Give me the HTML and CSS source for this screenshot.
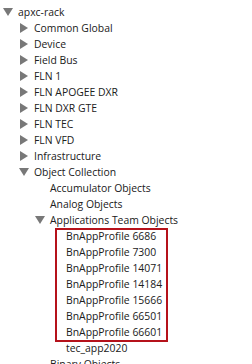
FILE: index.html
```html
<!DOCTYPE html>
<html lang="en">
<head>
<meta charset="utf-8"/>
<title>apxc-rack</title>
<link rel="stylesheet" href="styles.css">
</head>
<body>
<ul class="tree">
  <li><div class="row"><span class="tw open"></span>apxc-rack</div>
    <ul>
      <li><div class="row"><span class="tw"></span>Common Global</div></li>
      <li><div class="row"><span class="tw"></span>Device</div></li>
      <li><div class="row"><span class="tw"></span>Field Bus</div></li>
      <li><div class="row"><span class="tw"></span>FLN 1</div></li>
      <li><div class="row"><span class="tw"></span>FLN APOGEE DXR</div></li>
      <li><div class="row"><span class="tw"></span>FLN DXR GTE</div></li>
      <li><div class="row"><span class="tw"></span>FLN TEC</div></li>
      <li><div class="row"><span class="tw"></span>FLN VFD</div></li>
      <li><div class="row"><span class="tw"></span>Infrastructure</div></li>
      <li><div class="row"><span class="tw open"></span>Object Collection</div>
        <ul>
          <li><div class="row"><span class="leaf"></span>Accumulator Objects</div></li>
          <li><div class="row"><span class="leaf"></span>Analog Objects</div></li>
          <li><div class="row"><span class="tw open"></span>Applications Team Objects</div>
            <ul>
              <li class="mark">
                <ul>
                  <li><div class="row">BnAppProfile 6686</div></li>
                  <li><div class="row">BnAppProfile 7300</div></li>
                  <li><div class="row">BnAppProfile 14071</div></li>
                  <li><div class="row">BnAppProfile 14184</div></li>
                  <li><div class="row">BnAppProfile 15666</div></li>
                  <li><div class="row">BnAppProfile 66501</div></li>
                  <li><div class="row">BnAppProfile 66601</div></li>
                </ul>
              </li>
              <li><div class="row"><span class="leaf"></span>tec_app2020</div></li>
            </ul>
          </li>
          <li><div class="row"><span class="leaf"></span>Binary Objects</div></li>
        </ul>
      </li>
    </ul>
  </li>
</ul>
</body>
</html>
```

FILE: styles.css
```css
body {
  margin: 0;
  background: #fff;
  font-family: 'Open Sans', 'Noto Sans', sans-serif;
  font-size: 10.4px;
  color: #202020;
  overflow: hidden;
}
ul {
  list-style: none;
  margin: 0;
  padding: 0;
}
.tree {
  padding: 5px 0 0 2px;
}
.tree ul {
  padding-left: 16px;
}
.row {
  display: flex;
  align-items: flex-start;
  height: 16px;
  line-height: 14px;
  white-space: nowrap;
}
.tw, .leaf {
  flex: none;
  width: 16px;
  height: 16px;
  position: relative;
}
.tw::before {
  content: "";
  position: absolute;
  left: 2px;
  top: 2px;
  border-left: 8px solid #787878;
  border-top: 5px solid transparent;
  border-bottom: 5px solid transparent;
}
.tw.open::before {
  left: 1px;
  top: 3px;
  border-top: 8px solid #787878;
  border-left: 5px solid transparent;
  border-right: 5px solid transparent;
  border-bottom: 0;
}
.tree .mark > ul {
  padding-left: 0;
}
.mark {
  margin-left: 6px;
  width: 111px;
  outline: 2px solid #b5121b;
  outline-offset: -1px;
}
.mark .row {
  padding-left: 10px;
}
```
